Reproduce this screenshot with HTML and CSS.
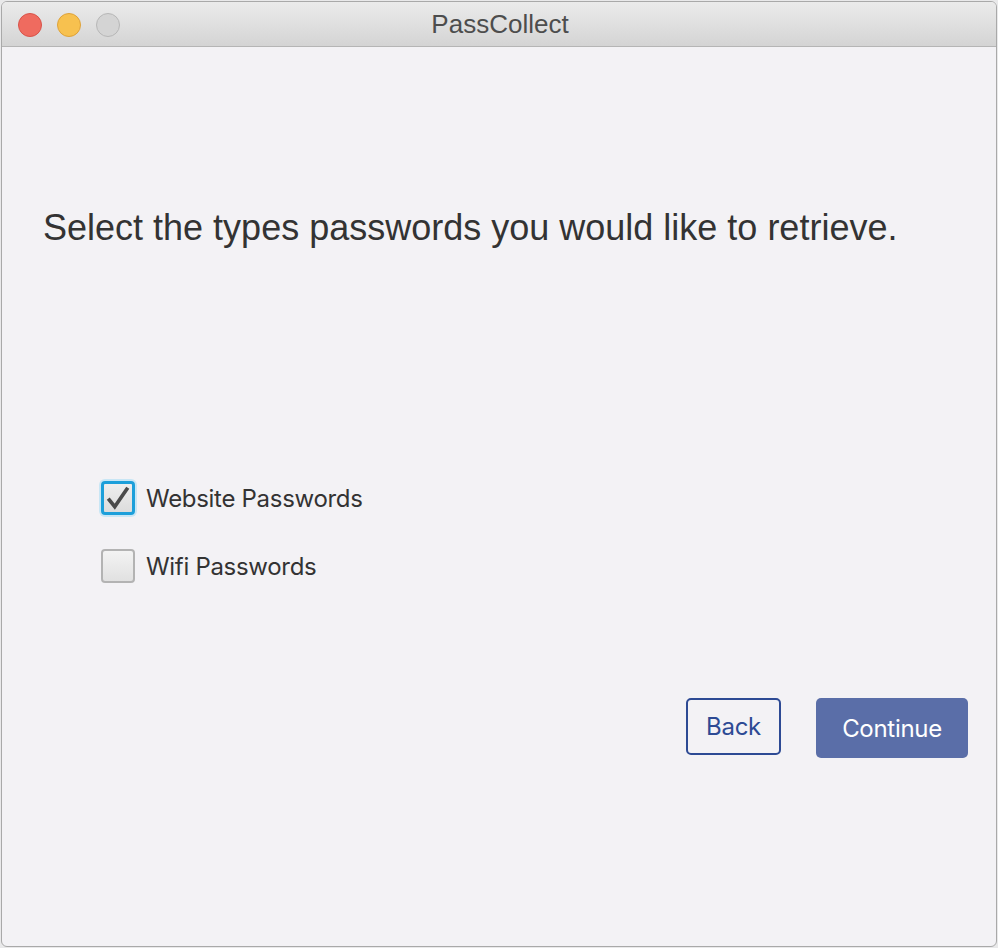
FILE: index.html
```html
<!DOCTYPE html>
<html>
<head>
<meta charset="utf-8">
<link rel="stylesheet" href="styles.css">
</head>
<body>
<div class="window">
  <div class="titlebar">
    <div class="lights">
      <span class="light red"></span>
      <span class="light yellow"></span>
      <span class="light gray"></span>
    </div>
    <div class="title">PassCollect</div>
  </div>
  <div class="content">
    <h1 class="heading">Select the types passwords you would like to retrieve.</h1>
    <div class="options">
      <label class="option">
        <span class="box checked focused">
          <svg viewBox="0 0 24 24" width="26" height="26"><path d="M3 12.5 L9 20 L21 2.5" fill="none" stroke="#4a4a4a" stroke-width="3.4" stroke-linejoin="miter"/></svg>
        </span>
        <span class="label">Website Passwords</span>
      </label>
      <label class="option">
        <span class="box"></span>
        <span class="label">Wifi Passwords</span>
      </label>
    </div>
    <div class="actions">
      <button class="btn back">Back</button>
      <button class="btn continue">Continue</button>
    </div>
  </div>
</div>
</body>
</html>
```

FILE: styles.css
```css
html, body {
  margin: 0;
  padding: 0;
  background: #e9e9ea;
}
body {
  width: 998px;
  height: 948px;
  padding: 1px 1px 1px 1px;
  box-sizing: border-box;
}
.window {
  height: 946px;
  background: #f3f2f5;
  border: 1px solid #a9a9a9;
  border-radius: 6px;
  box-sizing: border-box;
  display: flex;
  flex-direction: column;
  overflow: hidden;
}
.titlebar {
  height: 44px;
  flex: none;
  background: linear-gradient(#ebebeb, #d4d4d4);
  border-bottom: 1px solid #b5b5b5;
  display: flex;
  align-items: center;
  position: relative;
}
.lights {
  display: flex;
  gap: 15px;
  padding-left: 16px;
  padding-top: 1px;
}
.light {
  width: 24px;
  height: 24px;
  border-radius: 50%;
  box-sizing: border-box;
}
.red { background: #ef6b5f; border: 1px solid #d8534a; }
.yellow { background: #f7c14f; border: 1px solid #dea23a; }
.gray { background: #d4d4d4; border: 1px solid #b7b7b7; }
.title {
  position: absolute;
  left: 0;
  right: 0;
  top: 0;
  bottom: 0;
  display: flex;
  align-items: center;
  justify-content: center;
  font-family: "Liberation Sans", Arial, sans-serif;
  font-size: 26px;
  color: #4d4d4d;
  padding-left: 2px;
  padding-top: 1px;
}
.content {
  flex: 1;
  display: flex;
  flex-direction: column;
  padding: 0 0 0 41px;
}
.heading {
  margin: 160px 0 0 0;
  font-family: "Liberation Sans", Arial, sans-serif;
  font-weight: normal;
  font-size: 36px;
  line-height: 42px;
  color: #333333;
}
.options {
  margin: 232px 0 0 58px;
  display: flex;
  flex-direction: column;
  gap: 34px;
}
.option {
  display: flex;
  align-items: center;
  gap: 11px;
  height: 34px;
}
.box {
  width: 34px;
  height: 34px;
  box-sizing: border-box;
  border: 2px solid #b3b3b3;
  border-radius: 4px;
  background: linear-gradient(#f3f3f3, #e1e1e1);
  display: flex;
  align-items: center;
  justify-content: center;
}
.box.focused {
  border: 3px solid #1c9fda;
  box-shadow: 0 0 0 2px #c8e6f5;
  background: linear-gradient(#eeeeee, #dcdcdc);
}
.box svg { margin-top: -1px; }
.label {
  font-family: Inter, "Liberation Sans", sans-serif;
  font-size: 24px;
  color: #333333;
  letter-spacing: -0.3px;
}
.actions {
  display: flex;
  justify-content: flex-end;
  gap: 35px;
  margin: 115px 28px 0 0;
  align-items: flex-start;
}
.btn {
  font-family: Inter, "Liberation Sans", sans-serif;
  font-size: 24px;
  border-radius: 5px;
  cursor: pointer;
  box-sizing: border-box;
  letter-spacing: -0.3px;
}
.back {
  width: 95px;
  height: 57px;
  background: transparent;
  border: 2px solid #2d4a94;
  color: #2d4a94;
}
.continue {
  width: 152px;
  height: 60px;
  background: #5a6ea8;
  border: none;
  color: #ffffff;
}
```
